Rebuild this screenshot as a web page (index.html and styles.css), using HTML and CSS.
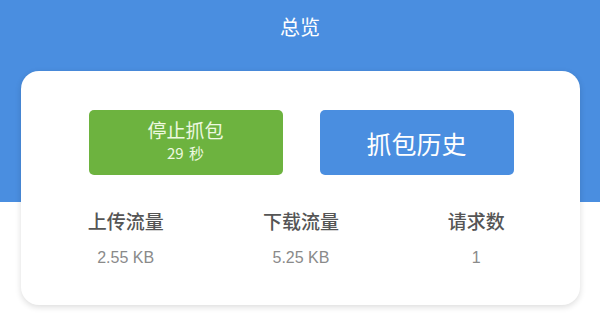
FILE: index.html
```html
<!DOCTYPE html>
<html lang="zh">
<head>
<meta charset="utf-8">
<title>总览</title>
<link rel="stylesheet" href="styles.css">
</head>
<body>
<div class="page">
  <header class="title">总览</header>
  <section class="card">
    <div class="actions">
      <button class="btn btn-stop">
        <span class="btn-main">停止抓包</span>
        <span class="btn-sub">29 秒</span>
      </button>
      <button class="btn btn-history">抓包历史</button>
    </div>
    <div class="stats">
      <div class="stat">
        <div class="stat-label">上传流量</div>
        <div class="stat-value">2.55 KB</div>
      </div>
      <div class="stat">
        <div class="stat-label">下载流量</div>
        <div class="stat-value">5.25 KB</div>
      </div>
      <div class="stat">
        <div class="stat-label">请求数</div>
        <div class="stat-value">1</div>
      </div>
    </div>
  </section>
</div>
</body>
</html>
```
FILE: styles.css
```css
* { box-sizing: border-box; }
html, body { margin: 0; padding: 0; }
body {
  font-family: "Noto Sans CJK SC", "Noto Sans", "Liberation Sans", sans-serif;
  background: #ffffff;
}
.page {
  width: 600px;
  height: 317px;
  overflow: hidden;
  background: linear-gradient(#4a8ee0 0, #4a8ee0 202px, #ffffff 202px);
  padding-top: 1px;
}
.title {
  height: 51px;
  line-height: 51px;
  text-align: center;
  color: #ffffff;
  font-size: 20px;
}
.card {
  margin: 19px 20px 0 21px;
  height: 234px;
  background: #ffffff;
  border-radius: 18px;
  box-shadow: 0 2px 6px rgba(0, 0, 0, 0.14);
  padding: 39px 16px 0 17px;
}
.actions {
  display: flex;
  justify-content: center;
  gap: 37px;
}
.btn {
  width: 194px;
  height: 65px;
  border: none;
  border-radius: 5px;
  font-family: inherit;
  color: #ffffff;
  display: flex;
  flex-direction: column;
  align-items: center;
  justify-content: center;
  padding: 0;
}
.btn-stop {
  background: #6db33f;
  color: #eef9e0;
}
.btn-main {
  font-size: 19px;
  line-height: 24px;
  margin-top: -4px;
}
.btn-sub {
  font-size: 15px;
  line-height: 20px;
  margin-top: 1px;
  word-spacing: 2px;
}
.btn-history {
  background: #4a8ee0;
  font-size: 25px;
}
.stats {
  display: grid;
  grid-template-columns: repeat(3, 1fr);
  margin-top: 33px;
}
.stat {
  text-align: center;
}
.stat-label {
  font-size: 19px;
  line-height: 26px;
  font-weight: 500;
  color: #555555;
}
.stat-value {
  margin-top: 14px;
  font-family: "Liberation Sans", "Noto Sans", sans-serif;
  font-size: 16px;
  line-height: 20px;
  color: #8a8a8a;
}
```
